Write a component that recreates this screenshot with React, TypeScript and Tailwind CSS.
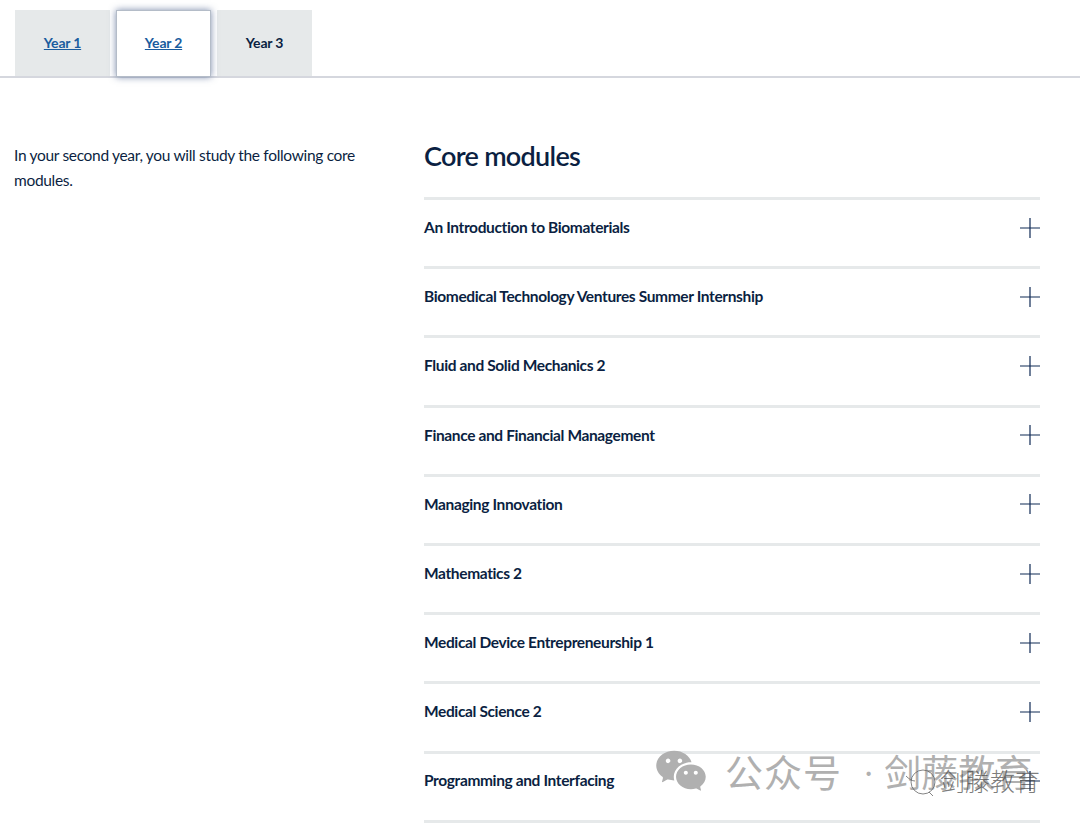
import { RiWechatFill } from "react-icons/ri";

const modules = [
  "An Introduction to Biomaterials",
  "Biomedical Technology Ventures Summer Internship",
  "Fluid and Solid Mechanics 2",
  "Finance and Financial Management",
  "Managing Innovation",
  "Mathematics 2",
  "Medical Device Entrepreneurship 1",
  "Medical Science 2",
  "Programming and Interfacing",
];

const PlusIcon = () => (
  <svg width="20" height="20" viewBox="0 0 20 20" className="shrink-0">
    <path d="M10 0V20M0 10H20" stroke="#0f2a55" strokeWidth="1.2" fill="none" />
  </svg>
);

const Tab = ({ label, active, link }: { label: string; active?: boolean; link?: boolean }) => (
  <div
    className={
      active
        ? "w-[95px] h-[67px] flex items-center justify-center pb-[2px] bg-white border border-[#b4bcc8] shadow-[0_0_7px_rgba(90,110,150,0.8)] relative"
        : "w-[95px] h-[66px] flex items-center justify-center pb-[2px] bg-[#e6e9ea]"
    }
  >
    <span
      className={
        link
          ? "text-[14px] font-bold tracking-[-0.2px] text-[#1a5c9e] underline"
          : "text-[14px] font-bold tracking-[-0.2px] text-[#0b1f42]"
      }
    >
      {label}
    </span>
  </div>
);

export default function App() {
  return (
    <div className="relative h-[827px] w-[1080px] overflow-hidden bg-white font-['Lato',sans-serif] text-[#0b1f42]">
      {/* Tabs */}
      <div className="flex h-[78px] items-start gap-[6px] border-b-2 border-[#d5d7de] pl-[15px] pt-[10px]">
        <Tab label="Year 1" link />
        <Tab label="Year 2" active link />
        <Tab label="Year 3" />
      </div>

      <div className="flex pl-[14px]">
        <p className="mt-[65px] w-[410px] pr-[50px] text-[15.5px] leading-[25px] tracking-[-0.32px]">
          In your second year, you will study the following core modules.
        </p>

        <div className="w-[616px]">
          <h2 className="mt-[58px] h-[61px] text-[27px] leading-[40px] font-semibold tracking-[-0.7px]">
            Core modules
          </h2>
          {modules.map((name) => (
            <div
              key={name}
              className="flex h-[69.2px] items-center justify-between border-t-[3px] border-[#e6e9ea] pb-[11px]"
            >
              <span className="text-[15.5px] font-bold tracking-[-0.37px]">{name}</span>
              <PlusIcon />
            </div>
          ))}
          <div className="border-t-[3px] border-[#e6e9ea]" />
        </div>
      </div>

      {/* Watermark */}
      <div className="absolute left-[656px] top-[744px] flex items-center text-[#b0b0b0]">
        <RiWechatFill size={54} className="-ml-[2px]" />
        <span className="ml-[17px] font-['Noto_Sans_CJK_SC',sans-serif] text-[38px] leading-[48px] tracking-[1px]">
          公众号
        </span>
        <span className="ml-[23px] mr-[12px] text-[28px] leading-[48px]">·</span>
        <span className="font-['Noto_Sans_CJK_SC',sans-serif] text-[37px] leading-[48px]">
          剑藤教育
        </span>
      </div>
      <svg width="34" height="32" viewBox="0 0 34 32" className="absolute left-[904px] top-[768px]">
        <circle cx="19" cy="14" r="12" stroke="#666666" strokeWidth="0.8" fill="none" />
        <path d="M25 24l4 4M2 8c3 3 6 5 9 5" stroke="#666666" strokeWidth="0.8" fill="none" />
      </svg>
      <div className="absolute left-[940px] top-[766px] font-['Noto_Sans_CJK_SC',sans-serif] text-[25px] font-light leading-[28px] text-[#444444]/70">
        剑滕教育
      </div>
    </div>
  );
}
